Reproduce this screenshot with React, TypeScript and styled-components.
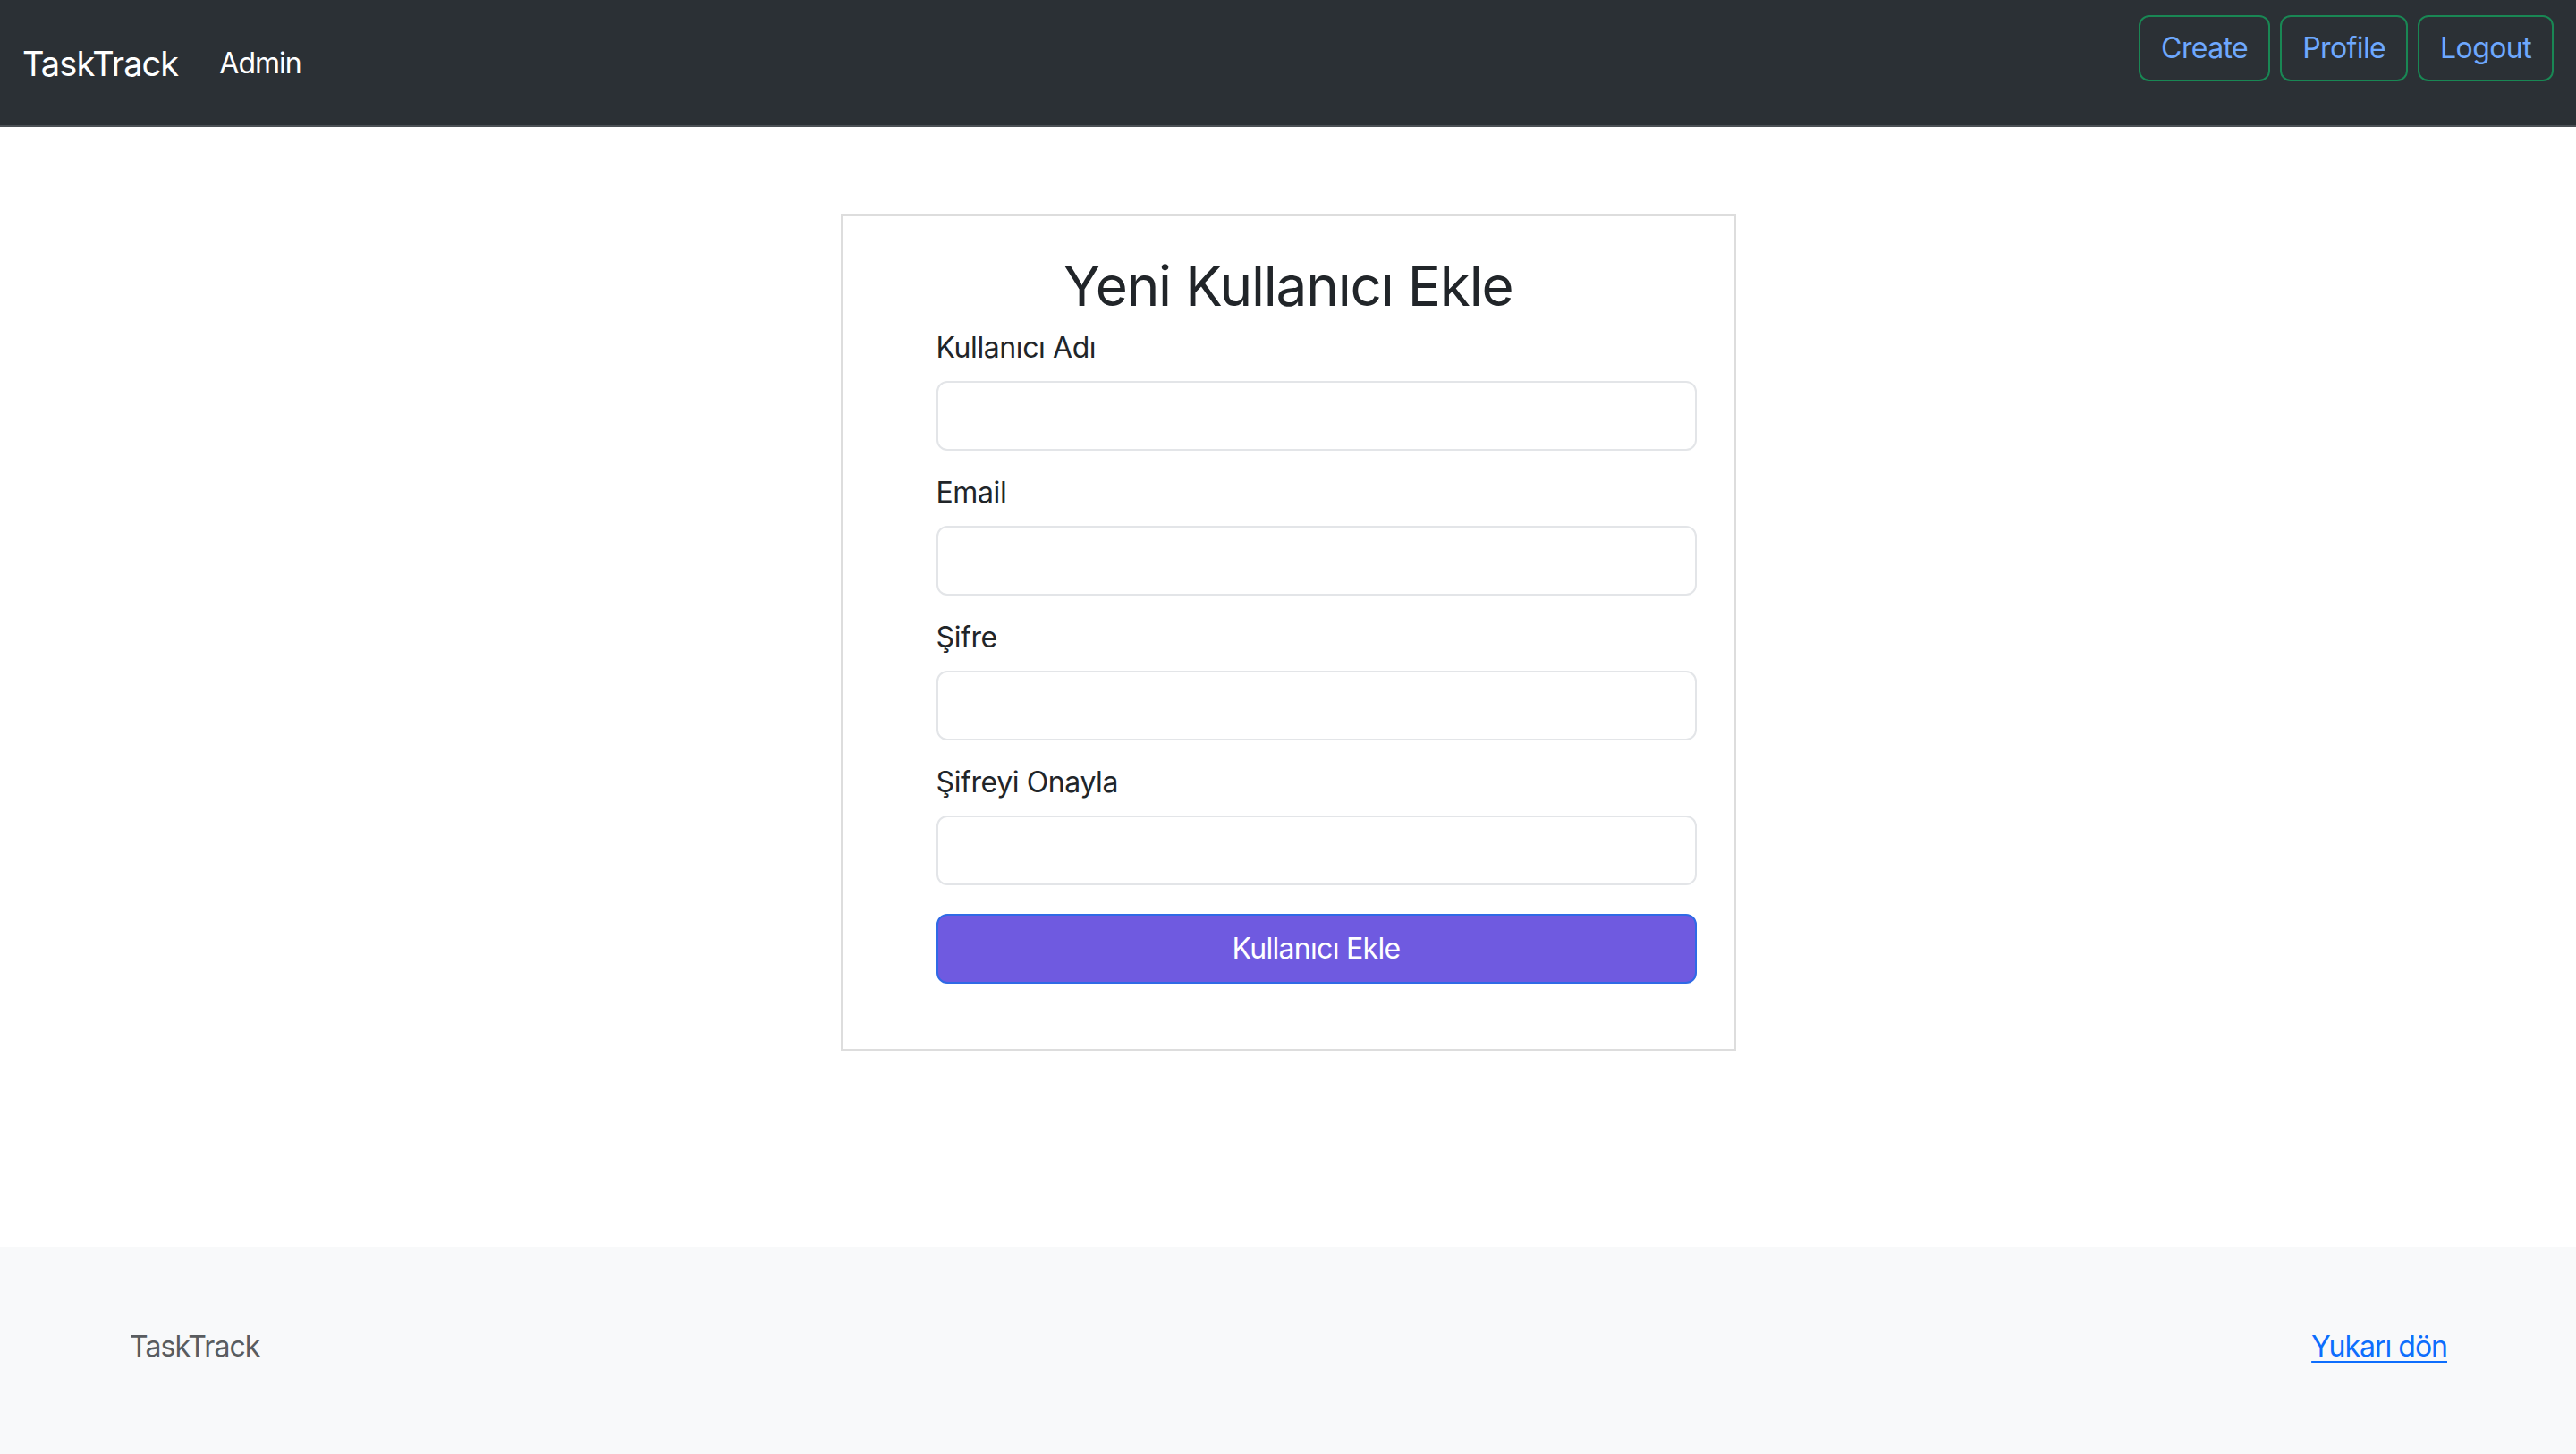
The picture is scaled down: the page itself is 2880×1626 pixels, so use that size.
import React from "react";
import styled, { createGlobalStyle } from "styled-components";

const GlobalStyle = createGlobalStyle`
  html, body {
    margin: 0;
    padding: 0;
    background: #ffffff;
  }
  body {
    font-family: Inter, "Noto Sans", "Liberation Sans", sans-serif;
    color: #212529;
    -webkit-font-smoothing: antialiased;
  }
  * { box-sizing: border-box; }
`;

const Page = styled.div`
  min-height: 100vh;
  display: flex;
  flex-direction: column;
`;

const NavBar = styled.nav`
  height: 142px;
  background: #2b3035;
  border-bottom: 2px solid #4b5055;
  display: flex;
  align-items: flex-start;
  justify-content: space-between;
  padding: 0 25px;
`;

const NavLeft = styled.div`
  display: flex;
  align-items: flex-start;
  gap: 46px;
  padding-top: 43px;
`;

const Brand = styled.a`
  font-size: 38px;
  line-height: 56px;
  color: #ffffff;
  text-decoration: none;
  letter-spacing: -0.9px;
`;

const NavLink = styled.a`
  padding-top: 4px;
  font-size: 32px;
  line-height: 48px;
  color: #ffffff;
  text-decoration: none;
  letter-spacing: -1px;
`;

const NavActions = styled.div`
  display: flex;
  gap: 11px;
  padding-top: 17px;
`;

const OutlineButton = styled.button`
  height: 74px;
  padding: 0 23px;
  border: 2px solid #198754;
  border-radius: 12px;
  background: transparent;
  color: #6ea8fe;
  font-family: inherit;
  font-size: 32px;
  line-height: 48px;
  letter-spacing: -0.6px;
`;

const Main = styled.main`
  flex: 1;
  padding: 97px 0 219px;
  display: flex;
  justify-content: center;
`;

const Card = styled.div`
  width: 1001px;
  border: 2px solid #dddddd;
  padding: 42px 42px 73px 105px;
  display: flex;
  flex-direction: column;
`;

const Title = styled.h2`
  margin: 0 0 8px -63px;
  font-size: 62px;
  line-height: 74px;
  font-weight: 400;
  text-align: center;
  letter-spacing: -1.2px;
  color: #212529;
`;

const Form = styled.form`
  display: flex;
  flex-direction: column;
  gap: 23px;
`;

const Field = styled.div`
  display: flex;
  flex-direction: column;
  gap: 13px;
`;

const Label = styled.label`
  font-size: 32px;
  line-height: 48px;
  font-weight: 400;
  color: #212529;
  letter-spacing: -0.4px;
`;

const Input = styled.input`
  width: 100%;
  height: 78px;
  border: 2px solid #e3e5e8;
  border-radius: 12px;
  background: #ffffff;
  padding: 0 24px;
  font-family: inherit;
  font-size: 32px;
  outline: none;
`;

const SubmitButton = styled.button`
  margin-top: 9px;
  width: 100%;
  height: 78px;
  border: 2px solid #2f6ae6;
  border-radius: 12px;
  background: #6f5ae0;
  color: #ffffff;
  font-family: inherit;
  font-size: 32px;
  line-height: 48px;
  letter-spacing: -0.7px;
`;

const Footer = styled.footer`
  background: #f8f9fa;
  padding: 88px 144px 120px 145px;
  display: flex;
  justify-content: space-between;
  align-items: baseline;
`;

const FooterText = styled.span`
  font-size: 32px;
  line-height: 48px;
  color: #595c5f;
  letter-spacing: -0.9px;
`;

const FooterLink = styled.a`
  font-size: 32px;
  line-height: 48px;
  color: #0d6efd;
  text-decoration: underline;
  text-underline-offset: 5px;
  text-decoration-thickness: 2px;
  letter-spacing: -1px;
`;

const fields = [
  { id: "username", label: "Kullanıcı Adı", type: "text" },
  { id: "email", label: "Email", type: "email" },
  { id: "password", label: "Şifre", type: "password" },
  { id: "confirm", label: "Şifreyi Onayla", type: "password" },
];

export default function App() {
  return (
    <>
      <GlobalStyle />
      <Page>
        <NavBar>
          <NavLeft>
            <Brand href="#">TaskTrack</Brand>
            <NavLink href="#">Admin</NavLink>
          </NavLeft>
          <NavActions>
            <OutlineButton>Create</OutlineButton>
            <OutlineButton>Profile</OutlineButton>
            <OutlineButton>Logout</OutlineButton>
          </NavActions>
        </NavBar>
        <Main>
          <Card>
            <Title>Yeni Kullanıcı Ekle</Title>
            <Form onSubmit={(e) => e.preventDefault()}>
              {fields.map((f) => (
                <Field key={f.id}>
                  <Label htmlFor={f.id}>{f.label}</Label>
                  <Input id={f.id} type={f.type} />
                </Field>
              ))}
              <SubmitButton type="submit">Kullanıcı Ekle</SubmitButton>
            </Form>
          </Card>
        </Main>
        <Footer>
          <FooterText>TaskTrack</FooterText>
          <FooterLink href="#">Yukarı dön</FooterLink>
        </Footer>
      </Page>
    </>
  );
}
